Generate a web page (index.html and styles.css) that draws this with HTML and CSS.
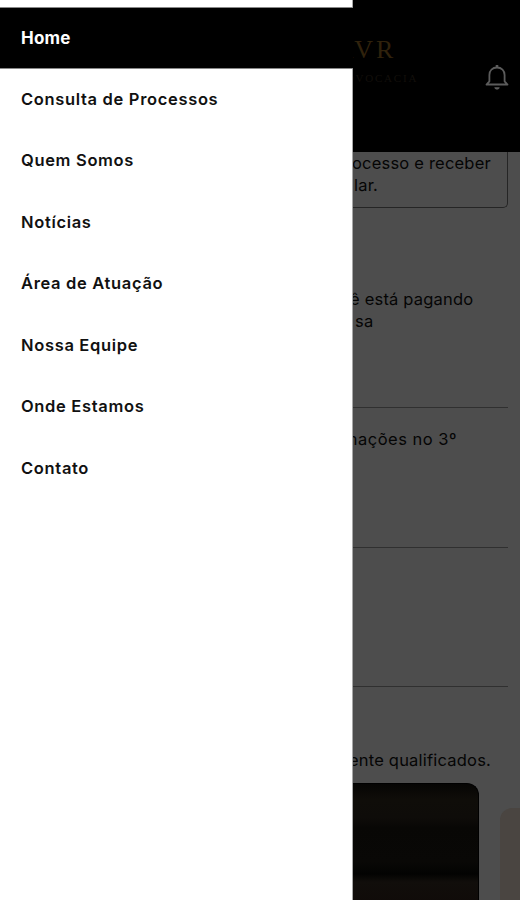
FILE: index.html
```html
<!DOCTYPE html>
<html lang="pt-BR">
<head>
    <meta charset="UTF-8">
    <meta name="viewport" content="width=device-width, initial-scale=1.0">
    <title>Home</title>
    <link rel="stylesheet" href="styles.css">
</head>
<body>
    <div class="app">
        <nav class="drawer">
            <ul class="menu">
                <li class="active">Home</li>
                <li>Consulta de Processos</li>
                <li>Quem Somos</li>
                <li>Notícias</li>
                <li>Área de Atuação</li>
                <li>Nossa Equipe</li>
                <li>Onde Estamos</li>
                <li>Contato</li>
            </ul>
        </nav>
        <div class="page">
            <header class="header">
                <div class="logo">
                    <p class="logo-name">RVR</p>
                    <p class="logo-sub">ADVOCACIA</p>
                </div>
                <svg class="bell" width="26" height="28" viewBox="0 0 26 28" fill="none" stroke="#5c5c5c" stroke-width="1.8" stroke-linejoin="round">
                    <path d="M2.5 21.5H23.5L20.6 18.3V12C20.6 7.4 17.6 4.5 13 4.5S5.4 7.4 5.4 12V18.3Z"/>
                    <path d="M13 2V4.5" stroke-width="2.6"/>
                    <path d="M10.3 24.2H15.7C15.2 26 14.3 26.6 13 26.6S10.8 26 10.3 24.2Z" fill="#5c5c5c" stroke="none"/>
                </svg>
            </header>
            <section class="card">
                <p>ocesso e receber</p>
                <p class="line2">lar.</p>
            </section>
            <section class="item first">
                <p class="pay">ê está pagando</p>
                <p class="line2">sa</p>
            </section>
            <section class="item">
                <p class="info">mações no 3º</p>
            </section>
            <section class="item"></section>
            <section class="team">
                <p>ente qualificados.</p>
                <div class="photos">
                    <div class="photo"></div>
                    <div class="photo next"></div>
                </div>
            </section>
        </div>
    </div>
</body>
</html>
```
FILE: styles.css
```css
*{
    margin: 0;
    padding: 0;
    box-sizing: border-box;
}
ul{
    list-style: none;
}
body{
    font-family: Inter, "Liberation Sans", sans-serif;
    font-size: 16.5px;
    background: #4d4d4d;
    color: #050505;
}
.app{
    display: flex;
    width: 520px;
    height: 900px;
    overflow: hidden;
}
.drawer{
    width: 353px;
    flex: none;
    background: #fff;
    border-right: 1px solid #a8a8a8;
    padding-top: 7px;
    position: relative;
    z-index: 1;
}
.menu li{
    height: 61.5px;
    padding-left: 21px;
    line-height: 60px;
    font-size: 16.5px;
    font-weight: 600;
    letter-spacing: 0.67px;
    color: #111;
}
.menu .active{
    width: 353px;
    background: #000;
    border-top: 1px solid #888;
    border-bottom: 1px solid #888;
    font-size: 17px;
    font-weight: 700;
    letter-spacing: 0.2px;
    color: #fff;
}
.page{
    width: 167px;
    flex: none;
    display: flex;
    flex-direction: column;
}
.page p{
    white-space: nowrap;
    line-height: 21.5px;
    letter-spacing: 0.2px;
}
.header{
    height: 152px;
    flex: none;
    display: flex;
    justify-content: space-between;
    background: #000;
    padding: 37px 10px 0 0;
}
.logo{
    width: 80px;
    margin-left: -17px;
    font-family: "Liberation Serif", serif;
}
.logo .logo-name{
    font-size: 26px;
    line-height: 26px;
    letter-spacing: 3px;
    color: #30220c;
}
.logo .logo-sub{
    margin-top: 7px;
    font-size: 11px;
    line-height: 16px;
    letter-spacing: 1.8px;
    color: #120f0b;
}
.bell{
    margin-top: 26px;
}
.card{
    height: 56px;
    flex: none;
    margin-right: 12px;
    padding-top: 1px;
    border: 1px solid #252525;
    border-width: 0 1px 1px 0;
    border-bottom-right-radius: 5px;
}
.card p{
    margin-left: -1px;
}
.card .line2,.item .line2{
    padding-left: 2px;
}
.item{
    height: 139.5px;
    flex: none;
    margin-right: 12px;
    padding-top: 21px;
    border-bottom: 1px solid #303030;
}
.first{
    height: 200px;
    padding-top: 81px;
}
.item .pay{
    margin-left: -3px;
}
.item .info{
    margin-left: -10px;
    letter-spacing: 0.5px;
}
.team{
    padding-top: 63px;
}
.team p{
    margin-left: -4px;
}
.photos{
    display: flex;
    gap: 21px;
    margin-top: 11px;
}
.photo{
    width: 126px;
    height: 120px;
    flex: none;
    border-top: 1px solid #000;
    border-right: 1px solid #000;
    border-top-right-radius: 12px;
    background: linear-gradient(#060504 0, #0f0d09 15px, #0e0c09 34px, #080705 44px, #090806 78px, #030302 90px, #110e0b 98px, #100b09 100%);
}
.next{
    margin-top: 25px;
    border: none;
    border-radius: 12px 0 0 0;
    background: #4a4541;
}
```
